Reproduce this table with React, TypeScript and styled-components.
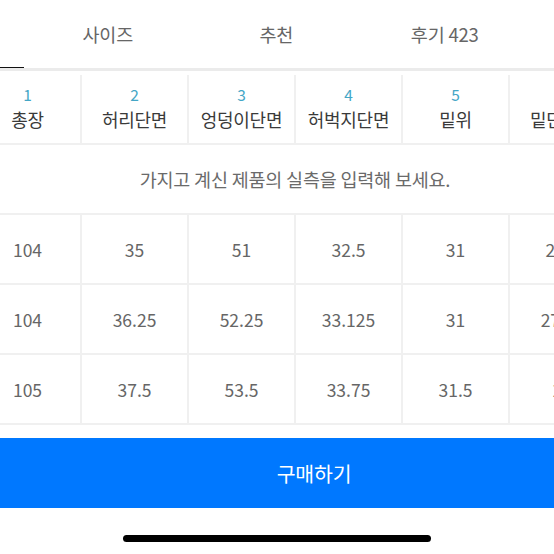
import { useLayoutEffect, useRef } from "react";
import styled, { createGlobalStyle } from "styled-components";

const GlobalStyle = createGlobalStyle`
  html, body {
    margin: 0;
    padding: 0;
    background: #ffffff;
  }
  body {
    font-family: "Noto Sans CJK KR", "Noto Sans", sans-serif;
    -webkit-font-smoothing: antialiased;
  }
`;

const Page = styled.div`
  width: 554px;
  height: 554px;
  overflow: hidden;
  display: flex;
  flex-direction: column;
  background: #ffffff;
`;

const Scroller = styled.div`
  overflow-x: auto;
  scrollbar-width: none;
  &::-webkit-scrollbar {
    display: none;
  }
`;

const TabBar = styled(Scroller)`
  border-bottom: 3px solid #ebebeb;
  flex-shrink: 0;
`;

const TabTrack = styled.div`
  display: flex;
  width: max-content;
  padding-right: 32px;
`;

const Tab = styled.div<{ $active?: boolean }>`
  position: relative;
  width: 168.5px;
  height: 68px;
  display: flex;
  align-items: center;
  justify-content: center;
  font-size: 18.5px;
  color: ${({ $active }) => ($active ? "#111111" : "#666666")};
  letter-spacing: -0.2px;

  &::after {
    content: "";
    position: absolute;
    left: 0;
    right: 0;
    bottom: -2px;
    height: 3px;
    background: ${({ $active }) => ($active ? "#111111" : "transparent")};
  }
`;

const TableScroller = styled(Scroller)`
  margin-top: 4px;
  flex-shrink: 0;
`;

const Table = styled.div`
  display: grid;
  grid-template-columns: repeat(6, 105px);
  grid-auto-rows: 68px;
  gap: 2px;
  width: max-content;
  background: #f0f0f0;
  border-bottom: 2px solid #f0f0f0;
`;

const HeadCell = styled.div`
  background: #ffffff;
  display: flex;
  flex-direction: column;
  align-items: center;
  justify-content: center;
  line-height: 25px;
  padding-bottom: 4px;
`;

const HeadNum = styled.span`
  font-size: 15.5px;
  color: #44a6c6;
`;

const HeadLabel = styled.span`
  font-size: 18px;
  color: #3a3a3a;
  letter-spacing: -0.3px;
`;

const Notice = styled.div`
  grid-column: 1 / -1;
  background: #ffffff;
  display: flex;
  align-items: center;
  justify-content: center;
  font-size: 18.5px;
  color: #6a6a6a;
  letter-spacing: -0.2px;
`;

const Cell = styled.div`
  background: #ffffff;
  display: flex;
  align-items: center;
  justify-content: center;
  font-size: 17.5px;
  color: #666666;
`;

const BuyButton = styled.button`
  margin-top: 13px;
  flex-shrink: 0;
  height: 70px;
  width: 100%;
  border: none;
  background: #0078ff;
  color: #ffffff;
  font-family: "Noto Sans CJK KR", "Noto Sans", sans-serif;
  font-size: 20.5px;
  padding: 0 0 0 74px;
  letter-spacing: -0.2px;
`;

const HomeArea = styled.div`
  flex: 1;
  display: flex;
  justify-content: center;
  padding-top: 27px;
`;

const HomeBar = styled.div`
  width: 308px;
  height: 7px;
  border-radius: 4px;
  background: #000000;
`;

const tabs = [
  { label: "상품정보", active: true },
  { label: "사이즈" },
  { label: "추천" },
  { label: "후기 423" },
];

const columns = ["총장", "허리단면", "엉덩이단면", "허벅지단면", "밑위", "밑단단면"];

const rows = [
  ["104", "35", "51", "32.5", "31", "26.5"],
  ["104", "36.25", "52.25", "33.125", "31", "27.25"],
  ["105", "37.5", "53.5", "33.75", "31.5", "28"],
];

export default function App() {
  const tabRef = useRef<HTMLDivElement>(null);
  const tableRef = useRef<HTMLDivElement>(null);

  useLayoutEffect(() => {
    if (tabRef.current) tabRef.current.scrollLeft = 145;
    if (tableRef.current) tableRef.current.scrollLeft = 25;
  }, []);

  return (
    <>
      <GlobalStyle />
      <Page>
        <TabBar ref={tabRef}>
          <TabTrack>
            {tabs.map((t) => (
              <Tab key={t.label} $active={t.active}>
                {t.label}
              </Tab>
            ))}
          </TabTrack>
        </TabBar>

        <TableScroller ref={tableRef}>
          <Table>
            {columns.map((c, i) => (
              <HeadCell key={c}>
                <HeadNum>{i + 1}</HeadNum>
                <HeadLabel>{c}</HeadLabel>
              </HeadCell>
            ))}
            <Notice>가지고 계신 제품의 실측을 입력해 보세요.</Notice>
            {rows.map((r, ri) =>
              r.map((v, ci) => <Cell key={`${ri}-${ci}`}>{v}</Cell>)
            )}
          </Table>
        </TableScroller>

        <BuyButton>구매하기</BuyButton>
        <HomeArea>
          <HomeBar />
        </HomeArea>
      </Page>
    </>
  );
}
